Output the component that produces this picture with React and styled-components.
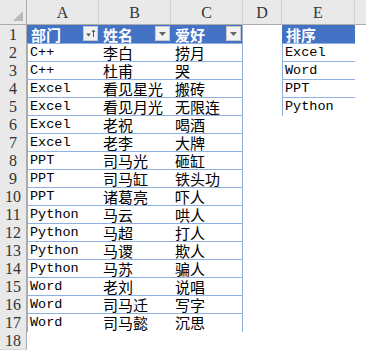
import styled, { createGlobalStyle } from 'styled-components';

const GlobalStyle = createGlobalStyle`
  html, body {
    margin: 0;
    padding: 0;
    background: #ffffff;
  }
`;

const tableLine = '#8eb0e2';
const columns = '27px 72px 72px 72px 39px 73px 72px';

const Sheet = styled.div`
  display: flex;
  flex-direction: column;
  width: 366px;
  height: 351px;
  overflow: hidden;
  background: #ffffff;
`;

const Row = styled.div`
  display: grid;
  grid-template-columns: ${columns};
  height: ${(p) => (p.$top ? '25px' : '18px')};
  flex-shrink: 0;
`;

const Corner = styled.div`
  background: #e9e9e9;
  box-sizing: border-box;
  border-right: 1px solid #ababab;
  border-bottom: 1px solid #ababab;
  display: flex;
  align-items: flex-end;
  justify-content: flex-end;
  padding: 0 3px 3px 0;
`;

const ColHead = styled.div`
  background: #e9e9e9;
  box-sizing: border-box;
  border-right: 1px solid #d0d0d0;
  border-bottom: 1px solid #ababab;
  display: flex;
  align-items: center;
  justify-content: center;
  padding-top: 2px;
  font-family: 'Liberation Serif', serif;
  font-size: 16px;
  line-height: 20px;
  color: #333333;
`;

const RowHead = styled.div`
  background: #e9e9e9;
  box-sizing: border-box;
  border-right: 1px solid #ababab;
  border-bottom: 1px solid #d4d4d4;
  display: flex;
  align-items: center;
  justify-content: center;
  padding-top: 1px;
  font-family: 'Liberation Serif', serif;
  font-size: 16px;
  line-height: 17px;
  color: #333333;
`;

const Cell = styled.div`
  position: relative;
  box-sizing: border-box;
  display: flex;
  align-items: center;
  padding-left: ${(p) => (p.$mono ? '2px' : '4px')};
  padding-top: 1px;
  white-space: nowrap;
  background: ${(p) => (p.$head ? '#4472c4' : 'transparent')};
  color: ${(p) => (p.$head ? '#ffffff' : '#000000')};
  font-family: ${(p) =>
    p.$mono
      ? "'Liberation Mono', 'Noto Sans CJK SC', monospace"
      : "'Noto Sans CJK SC', sans-serif"};
  font-size: ${(p) => (p.$mono ? '13.5px' : '15px')};
  line-height: 16px;
  font-weight: ${(p) => (p.$head ? 700 : 400)};
  border-left: ${(p) => (p.$left ? `1px solid ${tableLine}` : 'none')};
  border-right: ${(p) => (p.$right ? `1px solid ${tableLine}` : 'none')};
  border-bottom: ${(p) => (p.$bottom ? `1px solid ${tableLine}` : 'none')};
`;

const FilterButton = styled.div`
  position: absolute;
  top: 1px;
  right: 1px;
  width: 15px;
  height: 15px;
  box-sizing: border-box;
  background: #f2f2f2;
  border: 1px solid #c8c8c8;
  display: flex;
  align-items: center;
  justify-content: center;
`;

const people = [
  ['C++', '李白', '捞月'],
  ['C++', '杜甫', '哭'],
  ['Excel', '看见星光', '搬砖'],
  ['Excel', '看见月光', '无限连'],
  ['Excel', '老祝', '喝酒'],
  ['Excel', '老李', '大牌'],
  ['PPT', '司马光', '砸缸'],
  ['PPT', '司马缸', '铁头功'],
  ['PPT', '诸葛亮', '吓人'],
  ['Python', '马云', '哄人'],
  ['Python', '马超', '打人'],
  ['Python', '马谡', '欺人'],
  ['Python', '马苏', '骗人'],
  ['Word', '老刘', '说唱'],
  ['Word', '司马迁', '写字'],
  ['Word', '司马懿', '沉思'],
];

const order = ['排序', 'Excel', 'Word', 'PPT', 'Python'];

function Filter({ sorted }) {
  return (
    <FilterButton>
      {sorted ? (
        <svg width="11" height="9" viewBox="0 0 11 9">
          <path d="M1 4.5h5l-2.5 3z" fill="#555" />
          <path d="M8.5 1v7" stroke="#555" strokeWidth="1" />
          <path d="M7 3l1.5-2 1.5 2" fill="none" stroke="#555" strokeWidth="1" />
        </svg>
      ) : (
        <svg width="7" height="4" viewBox="0 0 7 4">
          <path d="M0 0h7L3.5 4z" fill="#666" />
        </svg>
      )}
    </FilterButton>
  );
}

function SheetRow({ n }) {
  const isHead = n === 1;
  const inTable = n <= 17;
  const data = isHead ? ['部门', '姓名', '爱好'] : people[n - 2] || ['', '', ''];
  const bottom = inTable && n < 17;
  const inList = n <= 5;

  return (
    <Row>
      <RowHead>{n}</RowHead>
      <Cell $head={isHead} $mono={!isHead} $left={inTable && !isHead} $bottom={bottom}>
        {data[0]}
        {isHead && <Filter sorted />}
      </Cell>
      <Cell $head={isHead} $bottom={bottom}>
        {data[1]}
        {isHead && <Filter />}
      </Cell>
      <Cell $head={isHead} $right={inTable} $bottom={bottom}>
        {data[2]}
        {isHead && <Filter />}
      </Cell>
      <Cell />
      <Cell $head={isHead} $mono={!isHead} $left={inList && !isHead} $bottom={inList && n < 5}>
        {inList ? order[n - 1] : ''}
      </Cell>
      <Cell />
    </Row>
  );
}

export default function App() {
  const numbers = Array.from({ length: 18 }, (_, i) => i + 1);

  return (
    <>
      <GlobalStyle />
      <Sheet>
        <Row $top>
          <Corner>
            <svg width="10" height="10" viewBox="0 0 10 10">
              <path d="M10 0V10H0z" fill="#b8b8b8" />
            </svg>
          </Corner>
          {['A', 'B', 'C', 'D', 'E', ''].map((c, i) => (
            <ColHead key={i}>{c}</ColHead>
          ))}
        </Row>
        {numbers.map((n) => (
          <SheetRow key={n} n={n} />
        ))}
      </Sheet>
    </>
  );
}
